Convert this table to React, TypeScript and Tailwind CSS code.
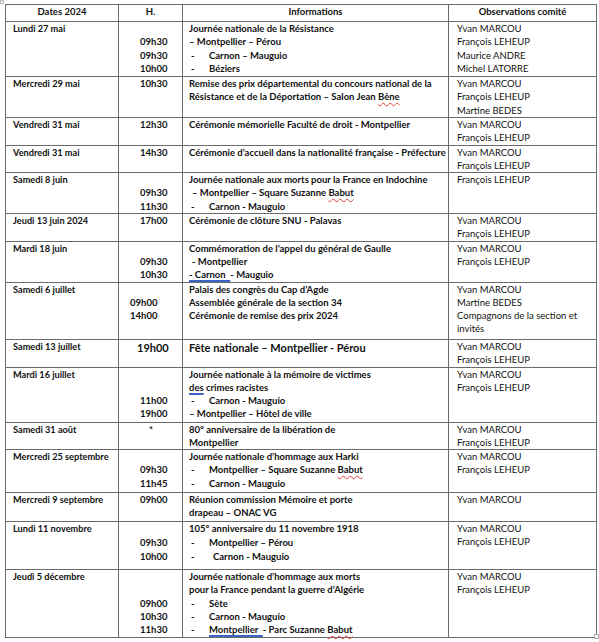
import type { ReactNode } from 'react'

type Row = {
	date: string
	h: string
	times: ReactNode
	info: ReactNode
	names: string[]
}

function Item({ children }: { children: ReactNode }) {
	return (
		<div className="flex">
			<span className="w-[20px] shrink-0 pl-[2px]">-</span>
			<span>{children}</span>
		</div>
	)
}

function Squiggle({ children }: { children: ReactNode }) {
	return (
		<span className="underline decoration-wavy decoration-[#e0403a] decoration-[1px] underline-offset-[2px]">
			{children}
		</span>
	)
}

function Blue({ children }: { children: ReactNode }) {
	return (
		<span className="underline decoration-[#3b64c8] decoration-[1.5px] underline-offset-[2px]">
			{children}
		</span>
	)
}

function Times({ lines, pad = 'pl-[21px]' }: { lines: string[]; pad?: string }) {
	return (
		<div className={pad}>
			{lines.map((t, i) => (
				<div key={i} className="h-[13.25px]">
					{t}
				</div>
			))}
		</div>
	)
}

const rows: Row[] = [
	{
		date: 'Lundi 27 mai',
		h: 'h-[55px]',
		times: <Times lines={['', '09h30', '09h30', '10h00']} />,
		info: (
			<>
				<div>Journée nationale de la Résistance</div>
				<div>– Montpellier – Pérou</div>
				<Item>Carnon – Mauguio</Item>
				<Item>Béziers</Item>
			</>
		),
		names: ['Yvan MARCOU', 'François LEHEUP', 'Maurice ANDRE', 'Michel LATORRE'],
	},
	{
		date: 'Mercredi 29 mai',
		h: 'h-[41px]',
		times: <Times lines={['10h30']} />,
		info: (
			<>
				<div>Remise des prix départemental du concours national de la</div>
				<div>
					Résistance et de la Déportation – Salon Jean <Squiggle>Bène</Squiggle>
				</div>
			</>
		),
		names: ['Yvan MARCOU', 'François LEHEUP', 'Martine BEDES'],
	},
	{
		date: 'Vendredi 31 mai',
		h: 'h-[27px]',
		times: <Times lines={['12h30']} />,
		info: <div>Cérémonie mémorielle Faculté de droit - Montpellier</div>,
		names: ['Yvan MARCOU', 'François LEHEUP'],
	},
	{
		date: 'Vendredi 31 mai',
		h: 'h-[27px]',
		times: <Times lines={['14h30']} />,
		info: <div>Cérémonie d’accueil dans la nationalité française - Préfecture</div>,
		names: ['Yvan MARCOU', 'François LEHEUP'],
	},
	{
		date: 'Samedi 8 juin',
		h: 'h-[41px]',
		times: <Times lines={['', '09h30', '11h30']} />,
		info: (
			<>
				<div>Journée nationale aux morts pour la France en Indochine</div>
				<div className="pl-[3px]">
					– Montpellier – Square Suzanne <Squiggle>Babut</Squiggle>
				</div>
				<Item>Carnon - Mauguio</Item>
			</>
		),
		names: ['François LEHEUP'],
	},
	{
		date: 'Jeudi 13 juin 2024',
		h: 'h-[27px]',
		times: <Times lines={['17h00']} />,
		info: <div>Cérémonie de clôture SNU - Palavas</div>,
		names: ['Yvan MARCOU', 'François LEHEUP'],
	},
	{
		date: 'Mardi 18 juin',
		h: 'h-[41px]',
		times: <Times lines={['', '09h30', '10h30']} />,
		info: (
			<>
				<div>Commémoration de l’appel du général de Gaulle</div>
				<div className="pl-[3px]">- Montpellier</div>
				<div>
					<Blue>- Carnon &nbsp;</Blue>- Mauguio
				</div>
			</>
		),
		names: ['Yvan MARCOU', 'François LEHEUP'],
	},
	{
		date: 'Samedi 6 juillet',
		h: 'h-[57px]',
		times: <Times lines={['', '09h00', '14h00']} pad="pl-[11px]" />,
		info: (
			<>
				<div>Palais des congrès du Cap d’Agde</div>
				<div>Assemblée générale de la section 34</div>
				<div>Cérémonie de remise des prix 2024</div>
			</>
		),
		names: ['Yvan MARCOU', 'Martine BEDES', 'Compagnons de la section et', 'invités'],
	},
	{
		date: 'Samedi 13 juillet',
		h: 'h-[28px]',
		times: <div className="pl-[18px] pt-[1px] text-[11px] leading-[13px]">19h00</div>,
		info: <div className="pt-[1px] text-[11px] leading-[13px]">Fête nationale – Montpellier - Pérou</div>,
		names: ['Yvan MARCOU', 'François LEHEUP'],
	},
	{
		date: 'Mardi 16 juillet',
		h: 'h-[55px]',
		times: <Times lines={['', '', '11h00', '19h00']} />,
		info: (
			<>
				<div>Journée nationale à la mémoire de victimes</div>
				<div>
					<Blue>des</Blue> crimes racistes
				</div>
				<Item>Carnon - Mauguio</Item>
				<div>– Montpellier – Hôtel de ville</div>
			</>
		),
		names: ['Yvan MARCOU', 'François LEHEUP'],
	},
	{
		date: 'Samedi 31 août',
		h: 'h-[27px]',
		times: <div className="pl-[30px]">*</div>,
		info: (
			<>
				<div>80° anniversaire de la libération de</div>
				<div>Montpellier</div>
			</>
		),
		names: ['Yvan MARCOU', 'François LEHEUP'],
	},
	{
		date: 'Mercredi 25 septembre',
		h: 'h-[43px]',
		times: <Times lines={['', '09h30', '11h45']} />,
		info: (
			<>
				<div>Journée nationale d’hommage aux Harki</div>
				<Item>
					Montpellier – Square Suzanne <Squiggle>Babut</Squiggle>
				</Item>
				<Item>Carnon - Mauguio</Item>
			</>
		),
		names: ['Yvan MARCOU', 'François LEHEUP'],
	},
	{
		date: 'Mercredi 9 septembre',
		h: 'h-[29px]',
		times: <Times lines={['09h00']} />,
		info: (
			<>
				<div>Réunion commission Mémoire et porte</div>
				<div>drapeau – ONAC VG</div>
			</>
		),
		names: ['Yvan MARCOU'],
	},
	{
		date: 'Lundi 11 novembre',
		h: 'h-[48px]',
		times: (
			<div className="pl-[21px]">
				<div className="h-[14px]" />
				<div className="h-[14px]">09h30</div>
				<div>10h00</div>
			</div>
		),
		info: (
			<>
				<div className="h-[14px]">105° anniversaire du 11 novembre 1918</div>
				<div className="h-[14px]">
					<Item>Montpellier – Pérou</Item>
				</div>
				<div className="flex">
					<span className="w-[24px] shrink-0 pl-[2px]">-</span>
					<span>Carnon - Mauguio</span>
				</div>
			</>
		),
		names: ['Yvan MARCOU', 'François LEHEUP'],
	},
	{
		date: 'Jeudi 5 décembre',
		h: 'h-[68px]',
		times: <Times lines={['', '', '09h00', '10h30', '11h30']} />,
		info: (
			<>
				<div>Journée nationale d’hommage aux morts</div>
				<div>pour la France pendant la guerre d’Algérie</div>
				<Item>Sète</Item>
				<Item>Carnon - Mauguio</Item>
				<Item>
					<Blue>Montpellier &nbsp;</Blue>- Parc Suzanne <Squiggle>Babut</Squiggle>
				</Item>
			</>
		),
		names: ['Yvan MARCOU', 'François LEHEUP'],
	},
]

export default function App() {
	const cell = 'border border-[#6b6b6b] align-top p-0'
	return (
		<main className="relative w-[599px] h-[642px] bg-white overflow-hidden font-['Lato',sans-serif] text-[9.5px] leading-[13.25px] text-[#111]">
			{/* Word table handles */}
			<div className="absolute left-0 top-0 w-[4px] h-[4px] border border-[#bbb] bg-[#eee]" />
			<div className="absolute left-[594px] top-[634px] w-[5px] h-[5px] border border-[#aaa] bg-white" />

			<div className="pt-[4px] pl-[5px]">
				<table className="table-fixed border-collapse w-[591px]">
					<colgroup>
						<col className="w-[113px]" />
						<col className="w-[64px]" />
						<col className="w-[266px]" />
						<col className="w-[148px]" />
					</colgroup>
					<thead>
						<tr className="h-[17px] font-bold">
							<th className={`${cell} text-center align-middle`}>Dates 2024</th>
							<th className={`${cell} text-center align-middle`}>H.</th>
							<th className={`${cell} text-center align-middle`}>Informations</th>
							<th className={`${cell} text-center align-middle`}>Observations comité</th>
						</tr>
					</thead>
					<tbody>
						{rows.map((r, i) => (
							<tr key={i} className={r.h}>
								<td className={`${cell} pl-[7px] font-bold text-[9.2px]`}>{r.date}</td>
								<td className={`${cell} font-bold`}>{r.times}</td>
								<td className={`${cell} pl-[6px] font-bold whitespace-nowrap`}>{r.info}</td>
								<td className={`${cell} pl-[8px]`}>
									{r.names.map((n) => (
										<div key={n}>{n}</div>
									))}
								</td>
							</tr>
						))}
					</tbody>
				</table>
			</div>
		</main>
	)
}
